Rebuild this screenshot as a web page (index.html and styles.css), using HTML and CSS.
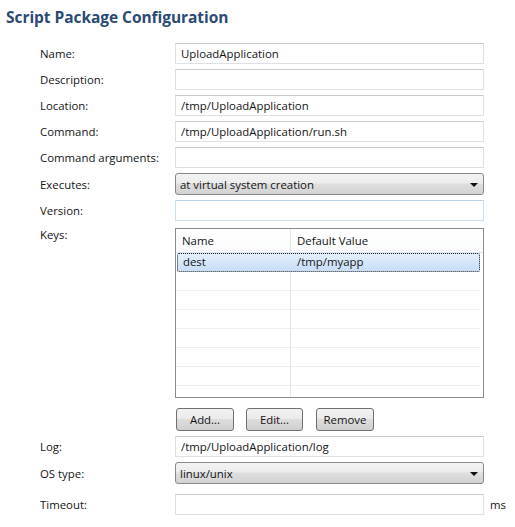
FILE: index.html
```html
<!DOCTYPE html>
<html>
<head>
<meta charset="utf-8">
<link rel="stylesheet" href="styles.css">
</head>
<body>
<div class="page">
  <h1 class="title">Script Package Configuration</h1>
  <div class="form">
    <label class="lbl">Name:</label>
    <div class="field"><div class="input">UploadApplication</div></div>
    <div></div>

    <label class="lbl">Description:</label>
    <div class="field"><div class="input"></div></div>
    <div></div>

    <label class="lbl">Location:</label>
    <div class="field"><div class="input">/tmp/UploadApplication</div></div>
    <div></div>

    <label class="lbl">Command:</label>
    <div class="field"><div class="input">/tmp/UploadApplication/run.sh</div></div>
    <div></div>

    <label class="lbl">Command arguments:</label>
    <div class="field"><div class="input"></div></div>
    <div></div>

    <label class="lbl">Executes:</label>
    <div class="field"><div class="select"><span>at virtual system creation</span><span class="arrow"></span></div></div>
    <div></div>

    <label class="lbl">Version:</label>
    <div class="field"><div class="input focus"></div></div>
    <div></div>

    <label class="lbl lbl-top">Keys:</label>
    <div class="field table-wrap">
      <div class="table">
        <div class="thead">
          <div class="th c1">Name</div>
          <div class="th c2">Default Value</div>
        </div>
        <div class="tbody">
          <div class="tr selected"><div class="td c1">dest</div><div class="td c2">/tmp/myapp</div></div>
          <div class="tr"><div class="td c1"></div><div class="td c2"></div></div>
          <div class="tr"><div class="td c1"></div><div class="td c2"></div></div>
          <div class="tr"><div class="td c1"></div><div class="td c2"></div></div>
          <div class="tr"><div class="td c1"></div><div class="td c2"></div></div>
          <div class="tr"><div class="td c1"></div><div class="td c2"></div></div>
          <div class="tr"><div class="td c1"></div><div class="td c2"></div></div>
          <div class="tr"><div class="td c1"></div><div class="td c2"></div></div>
        </div>
      </div>
    </div>
    <div></div>

    <div></div>
    <div class="field buttons">
      <button class="btn btn-add">Add...</button>
      <button class="btn btn-edit">Edit...</button>
      <button class="btn btn-remove">Remove</button>
    </div>
    <div></div>

    <label class="lbl">Log:</label>
    <div class="field"><div class="input">/tmp/UploadApplication/log</div></div>
    <div></div>

    <label class="lbl">OS type:</label>
    <div class="field"><div class="select"><span>linux/unix</span><span class="arrow"></span></div></div>
    <div></div>

    <label class="lbl lbl-last">Timeout:</label>
    <div class="field field-last"><div class="input"></div></div>
    <div class="unit">ms</div>
  </div>
</div>
</body>
</html>
```
FILE: styles.css
```css
html, body {
  margin: 0;
  padding: 0;
  background: #ffffff;
}
body {
  font-family: "Open Sans", "Noto Sans", "DejaVu Sans", sans-serif;
  font-size: 11.4px;
  color: #141414;
  width: 515px;
  height: 527px;
  overflow: hidden;
}
.page {
  padding: 5px 0 0 0;
}
.title {
  margin: 0 0 0 6px;
  font-family: "Open Sans", "Noto Sans", sans-serif;
  font-weight: 700;
  font-size: 15.5px;
  color: #2b4a75;
  height: 38px;
  line-height: 24px;
  letter-spacing: -0.05px;
}
.form {
  display: grid;
  grid-template-columns: 135px 309px 31px;
  padding-left: 40px;
  row-gap: 5px;
}
.lbl {
  display: flex;
  align-items: center;
  height: 21px;
  align-self: center;
}
.lbl-top {
  align-self: start;
  height: 16px;
  margin-top: 0;
}
.field {
  display: flex;
}
.input {
  box-sizing: border-box;
  width: 309px;
  height: 21px;
  border: 1px solid #dde1e6;
  border-top-color: #c8ccd2;
  background: #fff;
  padding: 0 5px;
  line-height: 19px;
  white-space: nowrap;
}
.input.focus {
  border-color: #c9e0ee;
  border-top-color: #b7d2e6;
}
.select {
  box-sizing: border-box;
  width: 309px;
  height: 22px;
  border: 1px solid #8a8a8a;
  border-radius: 3px;
  background: linear-gradient(#f3f3f3 0%, #ececec 45%, #dedede 50%, #d3d3d3 100%);
  padding: 0 4px 0 4px;
  display: flex;
  align-items: center;
  justify-content: space-between;
  white-space: nowrap;
}
.arrow {
  width: 0;
  height: 0;
  border-left: 4px solid transparent;
  border-right: 4px solid transparent;
  border-top: 4px solid #111;
  margin-right: 1px;
  margin-top: 1px;
}
.table-wrap {
  margin-top: 2px;
}
.table {
  box-sizing: border-box;
  width: 309px;
  height: 170px;
  border: 1px solid #8c8c8c;
  background: #fff;
  overflow: hidden;
  position: relative;
}
.thead {
  display: flex;
  height: 23px;
  border-bottom: 1px solid #e4e8ee;
  background: linear-gradient(#ffffff, #fafbfc);
}
.th {
  line-height: 23px;
  padding-left: 6px;
  box-sizing: border-box;
}
.c1 {
  width: 115px;
  border-right: 1px solid #e5e5e5;
  box-sizing: border-box;
  flex: none;
}
.c2 {
  width: 190px;
  flex: none;
}
.tbody {
  padding-right: 3px;
}
.tr {
  display: flex;
  height: 19px;
  border-bottom: 1px solid #eeeeee;
  box-sizing: border-box;
}
.td {
  line-height: 18px;
  padding-left: 6px;
  box-sizing: border-box;
}
.tr.selected {
  height: 19px;
  margin: 0 0 0 1px;
  border: 1px dotted #222;
  border-radius: 2px;
  background: linear-gradient(#e4effc, #c7ddf8);
}
.tr.selected .td {
  line-height: 16px;
  padding-left: 5px;
}
.tr.selected .c1 {
  width: 114px;
  border-right-color: transparent;
}
.buttons {
  margin-top: 5px;
  gap: 12px;
  height: 23px;
}
.btn {
  box-sizing: border-box;
  height: 23px;
  border: 1px solid #707070;
  border-radius: 3px;
  background: linear-gradient(#f2f2f2 0%, #ebebeb 45%, #dddddd 50%, #cfcfcf 100%);
  font-family: inherit;
  font-size: 11.4px;
  color: #141414;
  padding: 0;
  margin: 0;
}
.btn-add { width: 58px; margin-left: 1px; }
.btn-edit { width: 57px; }
.btn-remove { width: 58px; margin-left: 1px; }
.lbl-last {
  margin-top: 5px;
}
.field-last {
  margin-top: 5px;
}
.unit {
  align-self: center;
  margin-top: 5px;
  padding-left: 6px;
}
```
